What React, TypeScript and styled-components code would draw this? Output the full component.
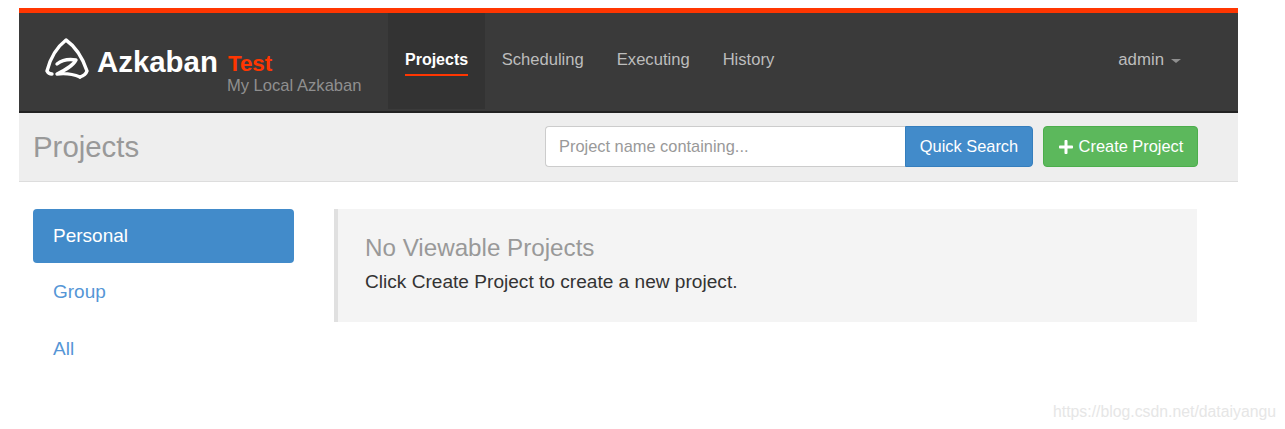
import { createGlobalStyle } from "styled-components";
import styled from "styled-components";
import { FaPlus } from "react-icons/fa";

const GlobalStyle = createGlobalStyle`
  html, body {
    margin: 0;
    padding: 0;
    background: #fff;
  }
  body {
    font-family: "Liberation Sans", Arial, sans-serif;
    color: #333;
  }
`;

const Page = styled.div`
  position: relative;
  width: 1285px;
  height: 429px;
  padding: 8px 47px 0 19px;
  box-sizing: border-box;
  overflow: hidden;
`;

const Navbar = styled.header`
  height: 105px;
  box-sizing: border-box;
  display: flex;
  background: #3a3a3a;
  border-top: 5px solid #ff3601;
  border-bottom: 2px solid #222;
`;

const Brand = styled.div`
  width: 369px;
  box-sizing: border-box;
  padding-left: 26px;
  display: flex;
  align-items: flex-start;
`;

const Logo = styled.svg`
  width: 44px;
  height: 42px;
  margin-top: 25px;
  flex: none;
`;

const BrandName = styled.span`
  margin: 32px 0 0 8px;
  font-size: 29.4px;
  line-height: 34px;
  font-weight: 700;
  color: #fff;
`;

const BrandText = styled.div`
  margin: 38px 0 0 9px;
  display: flex;
  flex-direction: column;
`;

const EnvName = styled.span`
  margin-left: 1px;
  font-size: 22.4px;
  line-height: 25px;
  font-weight: 700;
  color: #ff3601;
`;

const EnvDescription = styled.span`
  font-size: 16.6px;
  line-height: 20px;
  color: #8f8f8f;
`;

const NavList = styled.nav`
  flex: 1;
  display: flex;
  height: 96px;
`;

const NavItem = styled.a<{ $active?: boolean }>`
  height: 96px;
  box-sizing: border-box;
  padding: 36px ${(p) => (p.$active ? "17px" : "16.5px")} 0;
  font-size: ${(p) => (p.$active ? "16px" : "16.6px")};
  line-height: 22px;
  font-weight: ${(p) => (p.$active ? 700 : 400)};
  color: ${(p) => (p.$active ? "#fff" : "#bdbdbd")};
  background: ${(p) => (p.$active ? "#333" : "transparent")};
`;

const NavLabel = styled.span<{ $active?: boolean }>`
  display: inline-block;
  padding-bottom: 3px;
  border-bottom: 2px solid ${(p) => (p.$active ? "#ff3601" : "transparent")};
`;

const UserMenu = styled.div`
  padding: 36px 57px 0 0;
  display: flex;
  align-items: flex-start;
  gap: 7px;
  font-size: 16.8px;
  line-height: 22px;
  color: #bdbdbd;
`;

const Caret = styled.span`
  margin-top: 10px;
  border-top: 4px solid #8f8f8f;
  border-left: 5px solid transparent;
  border-right: 5px solid transparent;
`;

const SubHeader = styled.section`
  height: 69px;
  box-sizing: border-box;
  display: flex;
  justify-content: space-between;
  padding: 13px 40px 0 14px;
  background: #eee;
  border-bottom: 1px solid #ddd;
`;

const PageTitle = styled.h1`
  margin: 1px 0 0;
  font-size: 29.4px;
  line-height: 40px;
  font-weight: 400;
  color: #999;
`;

const Actions = styled.div`
  display: flex;
  gap: 10px;
`;

const SearchGroup = styled.form`
  display: flex;
  margin: 0;
`;

const SearchInput = styled.input`
  width: 360px;
  height: 41px;
  box-sizing: border-box;
  padding: 0 13px;
  font-family: inherit;
  font-size: 16.4px;
  color: #333;
  background: #fff;
  border: 1px solid #ccc;
  border-right: 0;
  border-radius: 4px 0 0 4px;
  outline: none;
  &::placeholder {
    color: #999;
    opacity: 1;
  }
`;

const Button = styled.button<{ $color: string; $border: string; $joined?: boolean }>`
  height: 41px;
  box-sizing: border-box;
  display: flex;
  align-items: center;
  justify-content: center;
  gap: 5px;
  padding: 0;
  font-family: inherit;
  font-size: 16.4px;
  color: #fff;
  background: ${(p) => p.$color};
  border: 1px solid ${(p) => p.$border};
  border-radius: ${(p) => (p.$joined ? "0 4px 4px 0" : "4px")};
`;

const SearchButton = styled(Button)`
  width: 128px;
`;

const CreateButton = styled(Button)`
  width: 155px;
`;

const Content = styled.main`
  display: flex;
  padding: 27px 41px 0 14px;
  gap: 40px;
`;

const SideNav = styled.ul`
  width: 261px;
  flex: none;
  margin: 0;
  padding: 0;
  list-style: none;
  display: flex;
  flex-direction: column;
  gap: 3px;
`;

const SideItem = styled.li<{ $active?: boolean }>`
  height: 53.5px;
  box-sizing: border-box;
  padding: 0 20px;
  display: flex;
  align-items: center;
  font-size: 19px;
  color: ${(p) => (p.$active ? "#fff" : "#5596d6")};
  background: ${(p) => (p.$active ? "#428bca" : "transparent")};
  border-radius: 4px;
`;

const Notice = styled.section`
  flex: 1;
  height: 113px;
  box-sizing: border-box;
  padding: 25px 27px 0;
  background: #f4f4f4;
  border-left: 4px solid #e0e0e0;
`;

const NoticeTitle = styled.h4`
  margin: 0;
  font-size: 24.2px;
  line-height: 27px;
  font-weight: 400;
  color: #999;
`;

const NoticeText = styled.p`
  margin: 10px 0 0;
  font-size: 19.1px;
  line-height: 22px;
  color: #333;
`;

const Watermark = styled.span`
  position: absolute;
  left: 1053px;
  top: 402px;
  font-size: 15.8px;
  line-height: 19px;
  color: #e6e6e6;
`;

const navItems = ["Projects", "Scheduling", "Executing", "History"];
const sideItems = ["Personal", "Group", "All"];

export default function App() {
  return (
    <Page>
      <GlobalStyle />
      <Navbar>
        <Brand>
          <Logo viewBox="0 0 44 42" fill="none" stroke="#fff" strokeWidth="3.4" strokeLinecap="round" strokeLinejoin="round">
            <path d="M7 36 C5 36 3 35 2 33 C5 21 12 9 21 2 C31 9 38 21 42 33 C41 36 38 38 35 39" />
            <path d="M12 26 C17 22 25 21 31 22 C28 28 20 32 12 36 C20 35 28 36 35 39" />
          </Logo>
          <BrandName>Azkaban</BrandName>
          <BrandText>
            <EnvName>Test</EnvName>
            <EnvDescription>My Local Azkaban</EnvDescription>
          </BrandText>
        </Brand>
        <NavList>
          {navItems.map((item, index) => (
            <NavItem key={item} $active={index === 0}>
              <NavLabel $active={index === 0}>{item}</NavLabel>
            </NavItem>
          ))}
        </NavList>
        <UserMenu>
          admin
          <Caret />
        </UserMenu>
      </Navbar>
      <SubHeader>
        <PageTitle>Projects</PageTitle>
        <Actions>
          <SearchGroup>
            <SearchInput placeholder="Project name containing..." />
            <SearchButton type="button" $color="#428bca" $border="#357ebd" $joined>
              Quick Search
            </SearchButton>
          </SearchGroup>
          <CreateButton type="button" $color="#5cb85c" $border="#4cae4c">
            <FaPlus size={16} />
            Create Project
          </CreateButton>
        </Actions>
      </SubHeader>
      <Content>
        <SideNav>
          {sideItems.map((item, index) => (
            <SideItem key={item} $active={index === 0}>
              {item}
            </SideItem>
          ))}
        </SideNav>
        <Notice>
          <NoticeTitle>No Viewable Projects</NoticeTitle>
          <NoticeText>Click Create Project to create a new project.</NoticeText>
        </Notice>
      </Content>
      <Watermark>https://blog.csdn.net/dataiyangu</Watermark>
    </Page>
  );
}
